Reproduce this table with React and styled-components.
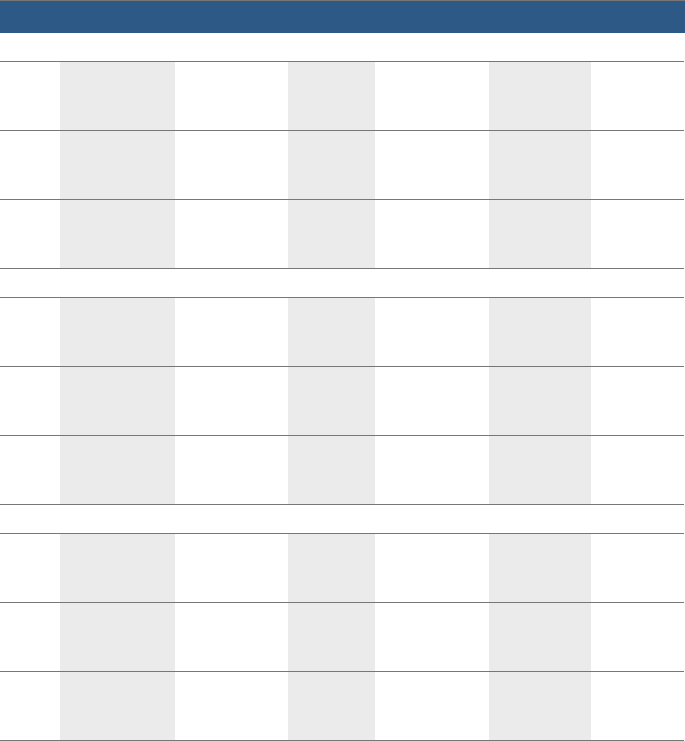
import styled, { createGlobalStyle } from "styled-components";

const GlobalStyle = createGlobalStyle`
  body {
    margin: 0;
    background: #fff;
    font-family: "Liberation Sans", Arial, sans-serif;
  }
`;

const Page = styled.div`
  width: 685px;
`;

const HeaderBar = styled.div`
  height: 32px;
  border-top: 1px solid #777;
  background: #2d5986;
`;

const SectionTitle = styled.div`
  width: 684px;
  height: 28px;
  border-bottom: 1px solid #777;
`;

const Row = styled.div`
  width: 684px;
  height: 68px;
  display: grid;
  grid-template-columns: 60px 115px 113px 87px 114px 102px 93px;
  border-bottom: 1px solid #777;
`;

const Cell = styled.div`
  background: ${(p) => (p.$shaded ? "#ebebeb" : "transparent")};
`;

const columns = [false, true, false, true, false, true, false];
const sections = [0, 1, 2];

function DataRow() {
  return (
    <Row>
      {columns.map((shaded, i) => (
        <Cell key={i} $shaded={shaded} />
      ))}
    </Row>
  );
}

export default function App() {
  return (
    <Page>
      <GlobalStyle />
      <HeaderBar />
      {sections.map((s) => (
        <div key={s}>
          <SectionTitle />
          <DataRow />
          <DataRow />
          <DataRow />
        </div>
      ))}
    </Page>
  );
}
